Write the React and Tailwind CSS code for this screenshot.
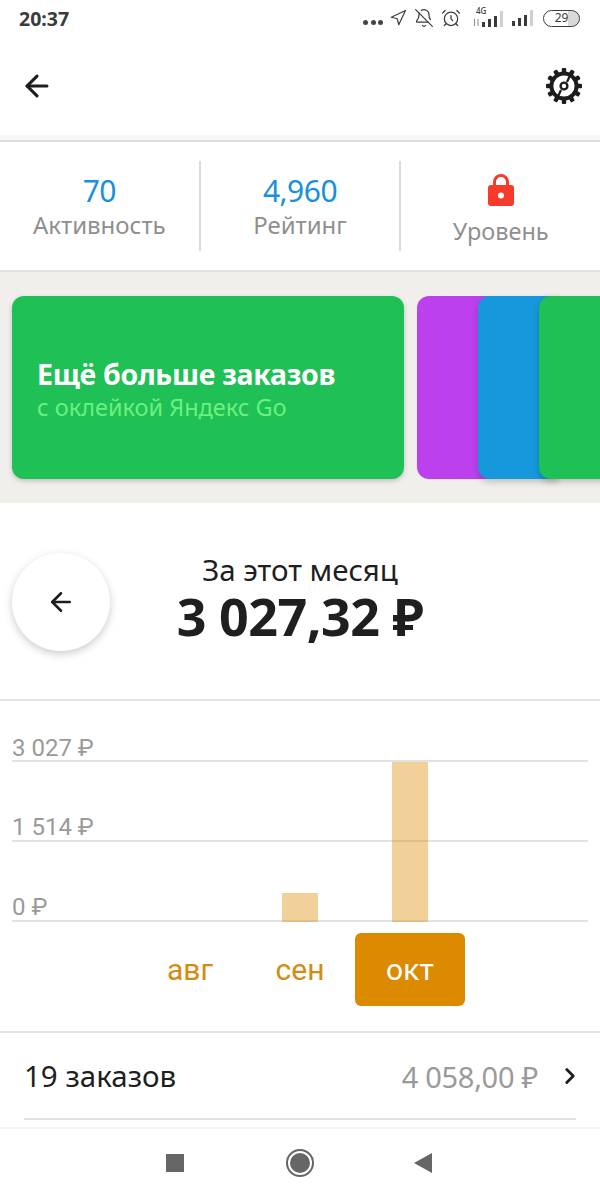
import React from 'react';
import { ArrowLeft, ChevronRight, Navigation, BellOff, AlarmClock } from 'lucide-react';

const GEAR_TEETH = [0, 30, 60, 90, 120, 150, 180, 210, 240, 270, 300, 330];

function Gear() {
  return (
    <svg width="38" height="38" viewBox="0 0 38 38" className="text-[#1d1d1d]">
      {GEAR_TEETH.map((a) => (
        <rect key={a} x="16.8" y="1" width="4.4" height="7" rx="1" fill="currentColor" transform={`rotate(${a} 19 19)`} />
      ))}
      <circle cx="19" cy="19" r="12.6" fill="none" stroke="currentColor" strokeWidth="4" />
      <circle cx="19" cy="19" r="3.4" fill="none" stroke="currentColor" strokeWidth="2.4" />
      <path d="M22 15 L25 8.5 M16 23 L13 29.5" stroke="currentColor" strokeWidth="2.2" />
    </svg>
  );
}

function Signal({ levels }) {
  // 4 палочки, серые - неактивные
  const heights = [5, 8, 11, 16];
  return (
    <div className="flex items-end gap-[3px] h-[16px]">
      {heights.map((h, i) => (
        <div key={h} className={i < levels ? 'w-[3px] bg-[#3a3a3a]' : 'w-[3px] bg-[#cfcfcf]'} style={{ height: h }} />
      ))}
    </div>
  );
}

function StatusBar() {
  return (
    <div className="h-[36px] flex items-center justify-between pl-[19px] pr-[20px] text-[#3c3c3c]">
      <span className="text-[19.5px] font-bold leading-none mt-[1px]">20:37</span>
      <div className="flex items-center">
        <div className="flex gap-[2.5px] mr-[6px] mt-[9px]">
          <div className="w-[5px] h-[5px] rounded-full bg-[#444]" />
          <div className="w-[5px] h-[5px] rounded-full bg-[#444]" />
          <div className="w-[5px] h-[5px] rounded-full bg-[#444]" />
        </div>
        <Navigation size={18} strokeWidth={1.6} className="mr-[7px]" />
        <BellOff size={20} strokeWidth={1.5} className="mr-[7px]" />
        <AlarmClock size={20} strokeWidth={1.5} className="mr-[12px]" />
        <div className="relative w-[30px] h-[18px] flex items-end justify-end mr-[9px]">
          <span className="absolute left-[3px] -top-[2px] text-[8px] leading-none font-medium">4G</span>
          <svg width="7" height="7" viewBox="0 0 7 7" className="absolute left-0 bottom-[1px]">
            <path d="M1.5 0V7M5 0V7" stroke="#8a8a8a" strokeWidth="1" />
          </svg>
          <Signal levels={3} />
        </div>
        <div className="mr-[10px]"><Signal levels={3} /></div>
        <div className="w-[37px] h-[17px] rounded-full border-[1.5px] border-[#3c3c3c] flex items-center justify-center text-[12px] leading-none bg-[linear-gradient(90deg,#fff_68%,#d9d9d9_68%)]">29</div>
      </div>
    </div>
  );
}

function Stat({ value, label }) {
  return (
    <div className="flex-1 flex flex-col items-center pt-[2px]">
      <div className="text-[30px] leading-[34px] text-[#1a8fdc] tracking-[-0.5px]">{value}</div>
      <div className="text-[24px] leading-[32px] text-[#8f8f8f] mt-[1px]">{label}</div>
    </div>
  );
}

function Chart() {
  const rows = ['3 027 ₽', '1 514 ₽', '0 ₽'];
  return (
    <div className="relative mx-[12px] pt-[33px] font-['Roboto',sans-serif]">
      {rows.map((r, i) => (
        <div key={r} className={i === 0 ? 'h-[28px] border-b-2 border-[#e2e2e2] text-[24px] leading-[28px] text-[#9a9a9a]' : 'h-[80px] border-b-2 border-[#e2e2e2] text-[24px] leading-[26px] text-[#9a9a9a] flex items-end'}>
          {r}
        </div>
      ))}
      <div className="absolute left-[270px] bottom-0 w-[36px] h-[29px] bg-[#dc8b00]/40" />
      <div className="absolute left-[380px] bottom-0 w-[36px] h-[160px] bg-[#dc8b00]/40" />
    </div>
  );
}

export default function App() {
  return (
    <div className="w-[600px] h-[1200px] overflow-hidden bg-white font-['Noto_Sans',sans-serif] flex flex-col">
      <StatusBar />

      <div className="h-[99px] flex items-center justify-between pl-[20px] pr-[17px]">
        <ArrowLeft size={34} strokeWidth={2.2} className="text-[#1d1d1d]" />
        <Gear />
      </div>

      <div className="h-[7px] bg-[#f7f7f7] border-b-2 border-[#dedede]" />

      <div className="h-[128px] flex items-center">
        <Stat value="70" label="Активность" />
        <div className="w-[2px] h-[90px] bg-[#dcdcdc]" />
        <Stat value="4,960" label="Рейтинг" />
        <div className="w-[2px] h-[90px] bg-[#dcdcdc]" />
        <div className="flex-1 flex flex-col items-center pt-[11px]">
          <svg width="28" height="34" viewBox="0 0 28 34" className="-mt-[4px]">
            <path d="M7.5 14V9a6.5 6.5 0 0 1 13 0v5" fill="none" stroke="#f63b2b" strokeWidth="3" />
            <rect x="1" y="12" width="26" height="21" rx="3" fill="#f63b2b" />
            <circle cx="14" cy="22.5" r="3" fill="#fff" />
          </svg>
          <div className="text-[23.5px] leading-[32px] text-[#8f8f8f] mt-[8px]">Уровень</div>
        </div>
      </div>

      <div className="h-[233px] bg-[#f1efec] border-t-2 border-[#e2e2e2] pt-[24px] flex overflow-hidden">
        <div className="shrink-0 w-[392px] h-[183px] ml-[12px] rounded-[12px] bg-[#1fc055] shadow-[0_2px_5px_rgba(0,0,0,0.2)] pl-[25px] pt-[4px] flex flex-col justify-center">
          <div className="text-[28.5px] leading-[34px] font-bold text-white tracking-[-0.3px]">Ещё больше заказов</div>
          <div className="text-[23.5px] leading-[32px] text-[#6cf07f]">с оклейкой Яндекс Go</div>
        </div>
        <div className="shrink-0 w-[80px] h-[183px] ml-[13px] rounded-l-[12px] bg-[#bd40ef]" />
        <div className="shrink-0 w-[80px] h-[183px] -ml-[19px] rounded-l-[12px] bg-[#1798dc] shadow-[0_3px_6px_rgba(0,0,0,0.2)]" />
        <div className="shrink-0 w-[80px] h-[183px] -ml-[19px] rounded-l-[12px] bg-[#1fc055] shadow-[0_3px_6px_rgba(0,0,0,0.2)]" />
      </div>

      <div className="h-[198px] border-b-2 border-[#e4e4e4] flex items-start pt-[50px] pl-[12px]">
        <div className="shrink-0 w-[98px] h-[98px] rounded-full bg-white shadow-[0_3px_8px_rgba(0,0,0,0.2)] flex items-center justify-center">
          <ArrowLeft size={30} strokeWidth={2} className="text-[#1d1d1d]" />
        </div>
        <div className="w-[380px] flex flex-col items-center text-[#1f1f1f]">
          <div className="text-[29.5px] leading-[34px]">За этот месяц</div>
          <div className="text-[52px] leading-[58px] font-bold tracking-[-0.5px]">3 027,32 ₽</div>
        </div>
      </div>

      <Chart />

      <div className="flex justify-center items-center mt-[11px] gap-0 text-[30px] font-['Roboto',sans-serif]">
        <div className="w-[110px] h-[73px] flex items-center justify-center text-[#d28c10]">авг</div>
        <div className="w-[110px] h-[73px] flex items-center justify-center text-[#d28c10]">сен</div>
        <div className="w-[110px] h-[73px] rounded-[6px] bg-[#dc8b00] flex items-center justify-center text-white">окт</div>
      </div>

      <div className="mt-[25px] border-t-2 border-[#e4e4e4]">
        <div className="h-[87px] mx-[24px] pt-[2px] border-b-2 border-[#e2e2e2] flex items-center">
          <span className="text-[29.5px] text-[#1f1f1f] flex-1">19 заказов</span>
          <span className="text-[29px] text-[#9a9a9a] tracking-[-0.3px]">4 058,00 ₽</span>
          <ChevronRight size={26} strokeWidth={2.6} className="text-[#1d1d1d] ml-[19px] -mr-[7px] -mt-[2px]" />
        </div>
      </div>

      <div className="mt-[7px] flex-1 border-t-2 border-[#f5f5f5] flex items-start pt-[24px]">
        <div className="w-[18px] h-[18px] bg-[#666] ml-[166px] mt-[1px]" />
        <div className="w-[28px] h-[28px] rounded-full border-2 border-[#666] ml-[102px] -mt-[4px] flex items-center justify-center">
          <div className="w-[20px] h-[20px] rounded-full bg-[#666]" />
        </div>
        <svg width="18" height="20" viewBox="0 0 18 20" className="ml-[100px]">
          <path d="M18 0V20L0 10Z" fill="#666" />
        </svg>
      </div>
    </div>
  );
}
